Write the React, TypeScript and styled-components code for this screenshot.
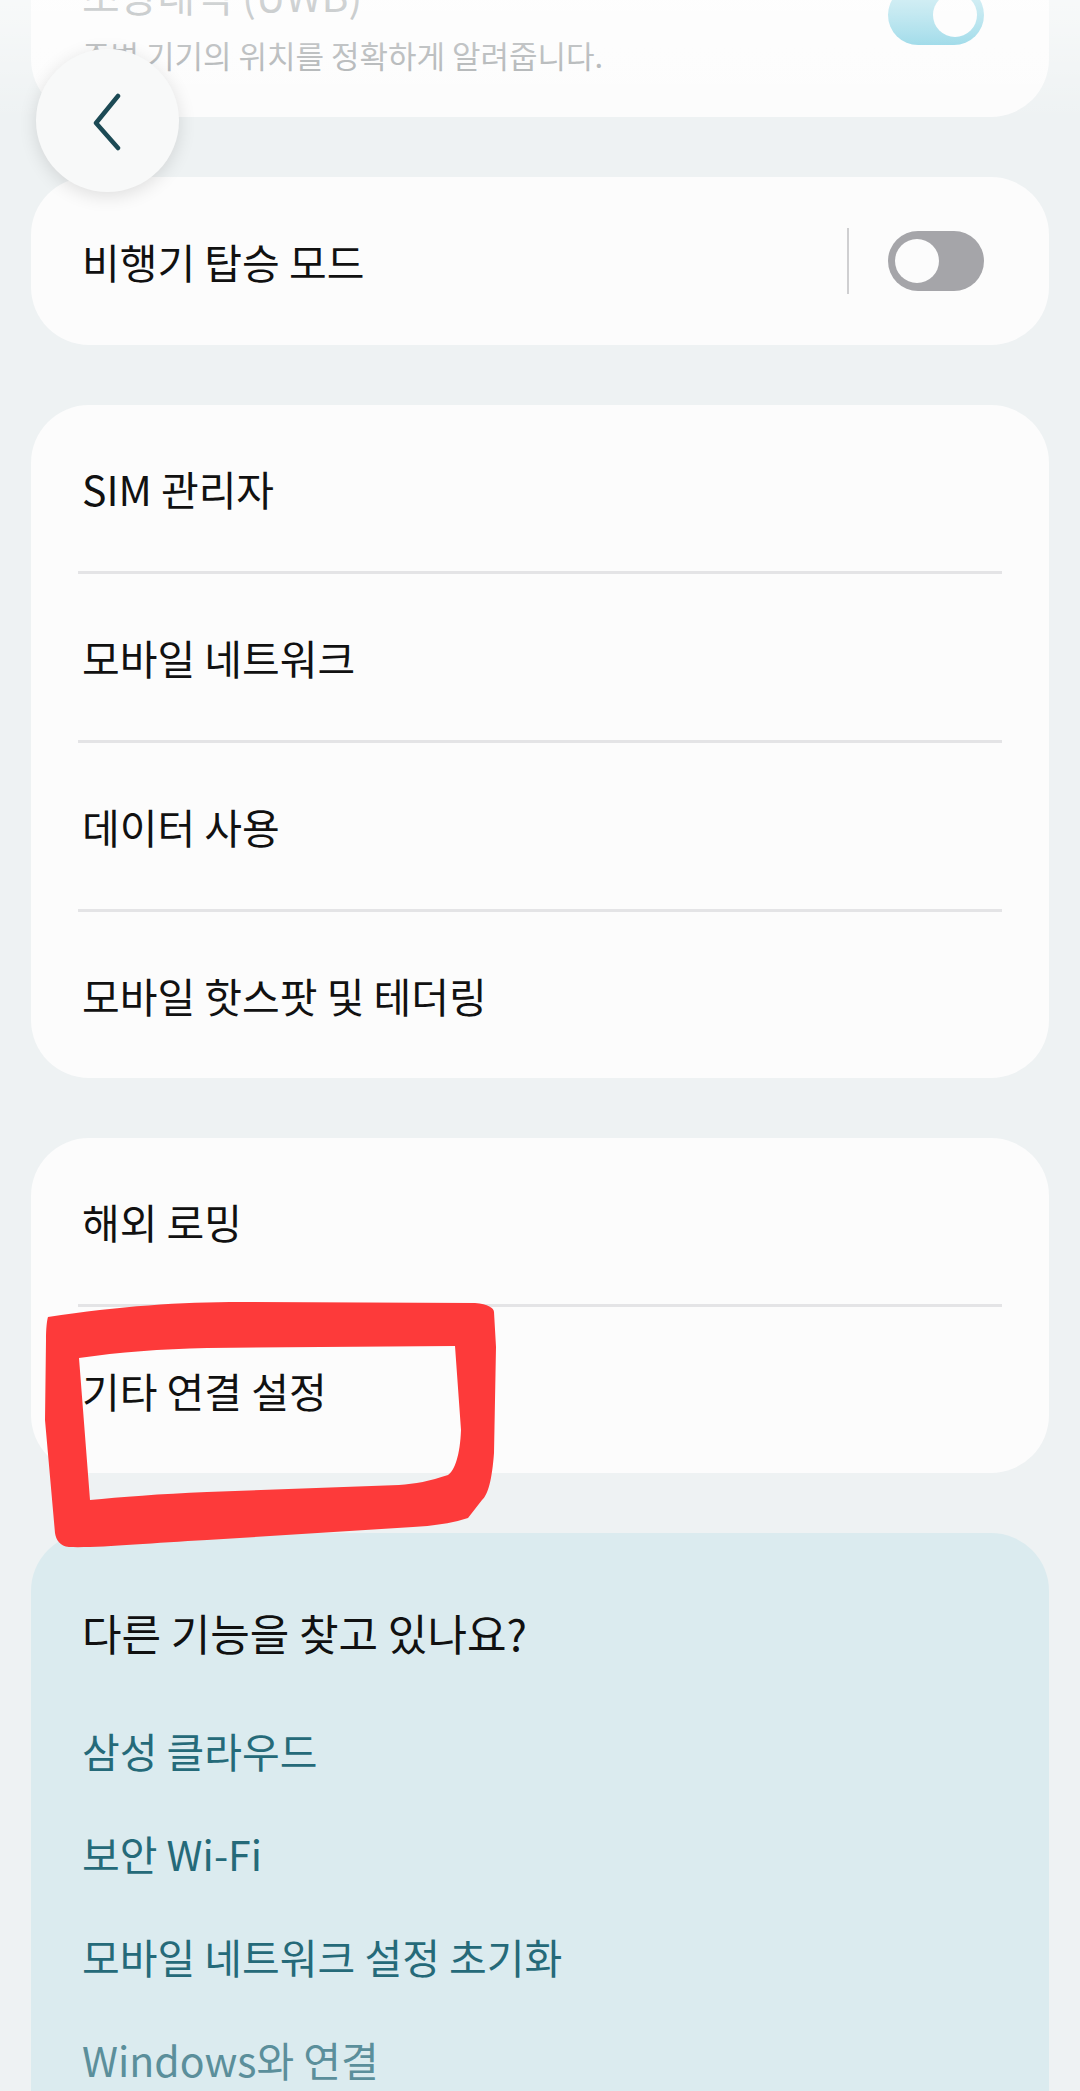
import React from "react";
import styled, { createGlobalStyle, css } from "styled-components";

const Global = createGlobalStyle`
  html, body { margin: 0; padding: 0; background: #eef2f3; overflow: hidden; }
  body { font-family: "Noto Sans CJK KR", "Noto Sans", sans-serif; }
`;

const Screen = styled.div`
  position: relative;
  width: 1080px;
  height: 2091px;
  overflow: hidden;
  background: #eef2f3;
  font-family: "Noto Sans CJK KR", "Noto Sans", sans-serif;
`;

const Column = styled.div`
  display: flex;
  flex-direction: column;
  gap: 60px;
  padding: 0 31px;
`;

const Card = styled.section<{ $tint?: boolean; $pull?: boolean }>`
  background: ${(p) => (p.$tint ? "#dbebef" : "#fcfcfc")};
  border-radius: 58px;
  display: flex;
  flex-direction: column;
  ${(p) =>
    p.$pull &&
    css`
      margin-top: -62px;
    `}
`;

const TopRow = styled.div`
  display: flex;
  align-items: center;
  padding: 30px 65px 42px 51px;
`;

const TextBlock = styled.div`
  flex: 1;
  display: flex;
  flex-direction: column;
  gap: 15px;
`;

const Title = styled.div`
  font-size: 41px;
  line-height: 52px;
  color: #9aa0a2;
`;

const Sub = styled.div`
  font-size: 31px;
  line-height: 40px;
  color: #a2a6a8;
`;

const Row = styled.div<{ $tall?: boolean }>`
  height: ${(p) => (p.$tall ? 168 : 166)}px;
  display: flex;
  align-items: center;
  padding: 0 65px 0 51px;
`;

const Label = styled.div`
  flex: 1;
  font-size: 41px;
  line-height: 52px;
  color: #111;
`;

const Divider = styled.div`
  height: 3px;
  margin: 0 47px;
  background: #e4e4e6;
`;

const VBar = styled.div`
  width: 2px;
  height: 66px;
  background: #cfcfd1;
  margin-right: 39px;
`;

const Track = styled.div<{ $on?: boolean; $lift?: boolean }>`
  position: relative;
  width: 96px;
  height: 60px;
  border-radius: 30px;
  flex-shrink: 0;
  background: ${(p) =>
    p.$on ? "linear-gradient(#a4dde9, #72cadf)" : "#a5a5a9"};
  ${(p) =>
    p.$lift &&
    css`
      margin-bottom: 13px;
    `}
`;

const Thumb = styled.div<{ $on?: boolean }>`
  position: absolute;
  top: 8px;
  ${(p) => (p.$on ? "right: 7px;" : "left: 7px;")}
  width: 44px;
  height: 44px;
  border-radius: 50%;
  background: #fcfcfc;
`;

const SuggestTitle = styled.div`
  font-size: 43px;
  line-height: 52px;
  color: #111;
  padding: 73px 51px 14px;
`;

const Links = styled.div`
  display: flex;
  flex-direction: column;
  gap: 51px;
  padding: 52px 51px 80px;
`;

const Link = styled.div<{ $faded?: boolean }>`
  font-size: 41px;
  line-height: 52px;
  color: ${(p) => (p.$faded ? "#5b8f9b" : "#256a79")};
`;

const TopFade = styled.div`
  position: absolute;
  left: 0;
  top: 0;
  width: 1080px;
  height: 120px;
  background: linear-gradient(rgba(255, 255, 255, 0.55), rgba(255, 255, 255, 0));
  pointer-events: none;
`;

const BackButton = styled.button`
  position: absolute;
  left: 36px;
  top: 49px;
  width: 143px;
  height: 143px;
  border-radius: 50%;
  border: none;
  padding: 0;
  background: #f8f9f9;
  box-shadow: 0 4px 18px rgba(0, 0, 0, 0.12);
  display: flex;
  align-items: center;
  justify-content: center;
`;

const Scribble = styled.svg`
  position: absolute;
  left: 40px;
  top: 1295px;
  width: 470px;
  height: 265px;
  pointer-events: none;
`;

const listA = ["SIM 관리자", "모바일 네트워크", "데이터 사용", "모바일 핫스팟 및 테더링"];
const listB = ["해외 로밍", "기타 연결 설정"];
const links = ["삼성 클라우드", "보안 Wi-Fi", "모바일 네트워크 설정 초기화", "Windows와 연결"];

function List({ items }: { items: string[] }) {
  return (
    <Card>
      {items.map((t, i) => (
        <React.Fragment key={t}>
          {i > 0 && <Divider />}
          <Row>
            <Label>{t}</Label>
          </Row>
        </React.Fragment>
      ))}
    </Card>
  );
}

export default function App() {
  return (
    <Screen>
      <Global />
      <Column>
        <Card $pull>
          <TopRow>
            <TextBlock>
              <Title>초광대역 (UWB)</Title>
              <Sub>주변 기기의 위치를 정확하게 알려줍니다.</Sub>
            </TextBlock>
            <Track $on $lift>
              <Thumb $on />
            </Track>
          </TopRow>
        </Card>
        <Card>
          <Row $tall>
            <Label>비행기 탑승 모드</Label>
            <VBar />
            <Track>
              <Thumb />
            </Track>
          </Row>
        </Card>
        <List items={listA} />
        <List items={listB} />
        <Card $tint>
          <SuggestTitle>다른 기능을 찾고 있나요?</SuggestTitle>
          <Links>
            {links.map((l, i) => (
              <Link key={l} $faded={i === links.length - 1}>
                {l}
              </Link>
            ))}
          </Links>
        </Card>
      </Column>
      <TopFade />
      <BackButton aria-label="뒤로">
        <svg width="40" height="60" viewBox="0 0 40 60">
          <path
            d="M30 5 L8 32 L30 57"
            fill="none"
            stroke="#1c4a55"
            strokeWidth="4.5"
            strokeLinecap="round"
            strokeLinejoin="round"
          />
        </svg>
      </BackButton>
      <Scribble viewBox="40 1295 470 265">
        <path
          fillRule="evenodd"
          fill="#fd3a3a"
          d="M48 1317 C120 1306 180 1302 241 1302 L475 1303 C488 1304 494 1308 494 1312 L496 1347 L494 1453 C492 1480 488 1495 482 1500 L468 1518 C450 1524 430 1526 413 1527 L207 1540 C150 1543 100 1548 69 1547 C60 1546 56 1540 55 1533 L45 1420 L46 1340 C46 1328 47 1320 48 1317 Z M79 1358 C120 1352 160 1349 207 1348 L455 1346 L461 1430 C460 1455 455 1470 448 1475 C430 1481 415 1484 399 1485 L207 1492 C160 1494 120 1497 90 1500 Z"
        />
      </Scribble>
    </Screen>
  );
}
